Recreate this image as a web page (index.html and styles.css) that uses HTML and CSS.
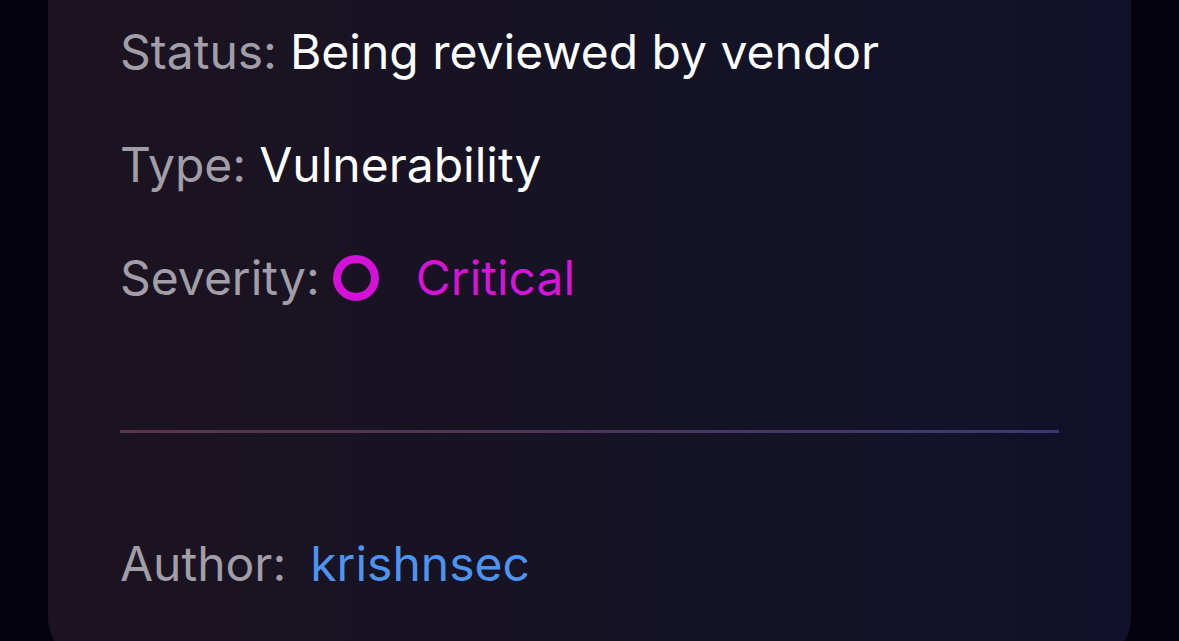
FILE: index.html
```html
<!DOCTYPE html>
<html>
<head>
<meta charset="utf-8">
<link rel="stylesheet" href="styles.css">
</head>
<body>
<div class="card">
  <div class="fields">
    <div class="row"><span class="label">Status:</span> <span class="value">Being reviewed by vendor</span></div>
    <div class="row"><span class="label">Type:</span> <span class="value">Vulnerability</span></div>
    <div class="row"><span class="label">Severity:</span><span class="sev-dot"></span><span class="critical">Critical</span></div>
  </div>
  <div class="divider"></div>
  <div class="row author"><span class="label">Author:</span><a class="author-link" href="#">krishnsec</a></div>
</div>
</body>
</html>
```
FILE: styles.css
```css
html, body {
  margin: 0;
  padding: 0;
  height: 100%;
  overflow: hidden;
  background: #03020d;
}
body {
  font-family: Inter, "Noto Sans", sans-serif;
  font-size: 48px;
  -webkit-font-smoothing: antialiased;
}
.card {
  margin: 0 48px;
  height: 660px;
  box-sizing: border-box;
  padding: 23px 72px 0 72px;
  border-radius: 0 0 42px 42px;
  background: linear-gradient(90deg, #1d1320 0%, #161324 45%, #10112a 100%);
}
.fields {
  display: flex;
  flex-direction: column;
  gap: 55px;
}
.row {
  display: flex;
  align-items: center;
  height: 58px;
  line-height: 58px;
  white-space: nowrap;
}
.label {
  color: #a29ea8;
  margin-right: 13px;
}
.value {
  color: #ffffff;
}
.sev-dot {
  width: 30px;
  height: 30px;
  border: 8px solid #d511d8;
  border-radius: 50%;
  margin-left: 0;
  margin-right: 37px;
  flex: none;
}
.critical {
  color: #d414d6;
}
.divider {
  margin-top: 123px;
  height: 3px;
  background: linear-gradient(90deg, #5c3347 0%, #4a3558 50%, #3a3774 100%);
}
.author {
  margin-top: 102px;
}
.author .label {
  margin-right: 24px;
}
.author-link {
  color: #4d93f0;
  text-decoration: none;
}
```
